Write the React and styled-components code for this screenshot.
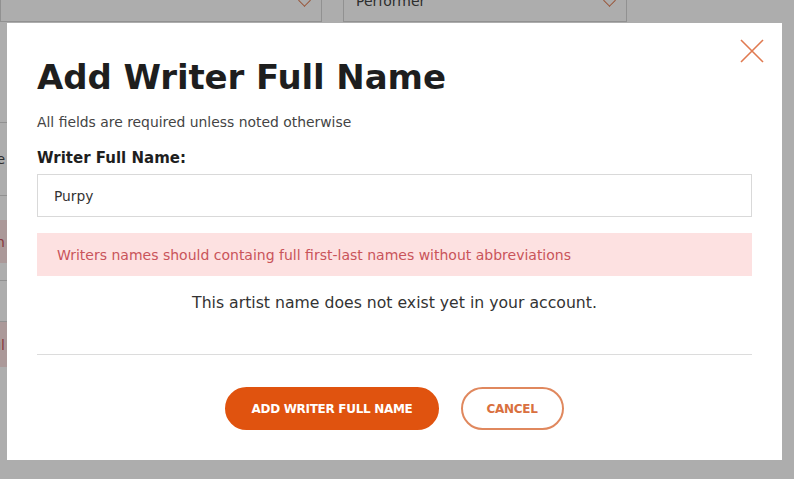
import React, { useState } from 'react';
import styled, { createGlobalStyle } from 'styled-components';

const GlobalStyle = createGlobalStyle`
  html, body {
    margin: 0;
    padding: 0;
    background: #ffffff;
    font-family: "DejaVu Sans", Inter, Arial, sans-serif;
    overflow: hidden;
  }
`;

// 背景のページ（モーダルの下）
const Page = styled.div`
  width: 794px;
  height: 479px;
  overflow: hidden;
  background: #ffffff;
`;

const TopRow = styled.div`
  display: flex;
  gap: 21px;
  margin-top: -24px;
`;

const SelectBox = styled.div`
  box-sizing: border-box;
  width: ${props => props.width}px;
  height: 46px;
  border: 1px solid #d6d6d6;
  display: flex;
  align-items: flex-end;
  justify-content: space-between;
  padding: 0 12px 12px 12px;
  font-size: 14px;
  color: #444;
`;

const Chevron = styled.span`
  width: 8px;
  height: 8px;
  border-right: 1.5px solid #e07a50;
  border-bottom: 1.5px solid #e07a50;
  transform: rotate(45deg);
  margin-bottom: 4px;
`;

const SideColumn = styled.div`
  display: flex;
  flex-direction: column;
  width: 300px;
  margin-left: -290px;
  margin-top: 100px;
`;

const SideRow = styled.div`
  box-sizing: border-box;
  height: ${props => props.h}px;
  margin-bottom: ${props => props.mb || 0}px;
  border-top: ${props => (props.lined ? '1px solid #d6d6d6' : 'none')};
  border-bottom: ${props => (props.lined ? '1px solid #d6d6d6' : 'none')};
  background: ${props => (props.pink ? '#fde2e2' : 'transparent')};
  color: ${props => (props.pink ? '#c9545a' : '#444')};
  font-size: 14px;
  display: flex;
  align-items: center;
  justify-content: flex-end;
  padding-right: 5px;
`;

const Backdrop = styled.div`
  position: fixed;
  inset: 0;
  background: rgba(0, 0, 0, 0.32);
`;

// モーダル本体
const Modal = styled.div`
  position: fixed;
  top: 23px;
  left: 7px;
  width: 775px;
  box-sizing: border-box;
  background: #ffffff;
  padding: 30px;
  display: flex;
  flex-direction: column;
`;

const CloseButton = styled.button`
  position: absolute;
  top: 16px;
  right: 18px;
  width: 24px;
  height: 24px;
  padding: 0;
  border: none;
  background: none;
  cursor: pointer;
`;

const Title = styled.h2`
  margin: 2px 0 0 0;
  font-size: 34px;
  line-height: 44px;
  font-weight: 700;
  color: #1e1e1e;
  letter-spacing: -0.1px;
`;

const Note = styled.p`
  margin: 14px 0 0 0;
  font-size: 13.9px;
  line-height: 18px;
  color: #444;
`;

const Label = styled.label`
  margin-top: 17px;
  font-size: 15px;
  line-height: 20px;
  font-weight: 700;
  color: #1e1e1e;
`;

const Input = styled.input`
  margin-top: 6px;
  box-sizing: border-box;
  width: 100%;
  height: 43px;
  border: 1px solid #d9d9d9;
  padding: 0 16px;
  font-family: inherit;
  font-size: 13.8px;
  color: #333;
  outline: none;
`;

const ErrorBox = styled.div`
  margin-top: 16px;
  height: 43px;
  background: #fde1e1;
  color: #c9545a;
  font-size: 14px;
  display: flex;
  align-items: center;
  padding: 0 20px;
`;

const Info = styled.p`
  margin: 17px 0 0 0;
  text-align: center;
  font-size: 15.7px;
  line-height: 20px;
  color: #333;
`;

const Divider = styled.hr`
  margin: 41px 0 0 0;
  border: none;
  border-top: 1px solid #dcdcdc;
`;

const Actions = styled.div`
  display: flex;
  justify-content: center;
  gap: 22px;
  margin-top: 32px;
`;

const PillButton = styled.button`
  box-sizing: border-box;
  height: 43px;
  padding: 0 ${props => (props.primary ? 24 : 24)}px;
  border-radius: 22px;
  border: 2px solid;
  border-color: ${props => (props.primary ? '#e0530f' : '#e0885e')};
  background: ${props => (props.primary ? '#e0530f' : '#ffffff')};
  color: ${props => (props.primary ? '#ffffff' : '#d9703f')};
  font-family: inherit;
  font-size: 12px;
  font-weight: 700;
  letter-spacing: -0.3px;
  cursor: pointer;
`;

const App = () => {
  const [name, setName] = useState('Purpy');

  return (
    <>
      <GlobalStyle />
      <Page>
        <TopRow>
          <SelectBox width={322}>
            <span />
            <Chevron />
          </SelectBox>
          <SelectBox width={284}>
            <span>Performer</span>
            <Chevron />
          </SelectBox>
        </TopRow>
        <SideColumn>
          <SideRow h={74} mb={24} lined>Name</SideRow>
          <SideRow h={43} mb={17} pink>Written by Purpyn</SideRow>
          <SideRow h={42} mb={0} lined />
          <SideRow h={45} pink>Writers names ful</SideRow>
        </SideColumn>
      </Page>
      <Backdrop />
      <Modal>
        <CloseButton aria-label="close">
          <svg width="24" height="24" viewBox="0 0 24 24">
            <path d="M1 1 L23 23 M23 1 L1 23" stroke="#e07a50" strokeWidth="1.6" fill="none" />
          </svg>
        </CloseButton>
        <Title>Add Writer Full Name</Title>
        <Note>All fields are required unless noted otherwise</Note>
        <Label>Writer Full Name:</Label>
        <Input value={name} onChange={e => setName(e.target.value)} />
        <ErrorBox>Writers names should containg full first-last names without abbreviations</ErrorBox>
        <Info>This artist name does not exist yet in your account.</Info>
        <Divider />
        <Actions>
          <PillButton primary>ADD WRITER FULL NAME</PillButton>
          <PillButton>CANCEL</PillButton>
        </Actions>
      </Modal>
    </>
  );
};

export default App;
